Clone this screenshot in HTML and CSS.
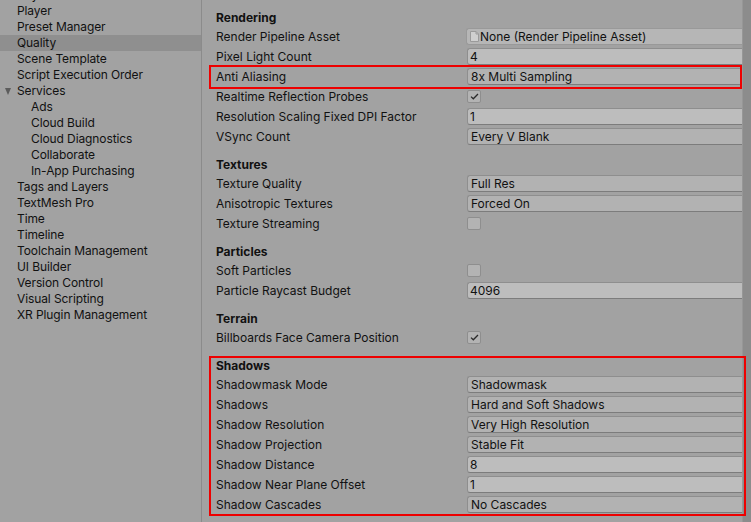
FILE: index.html
```html
<!DOCTYPE html>
<html>
<head>
<meta charset="utf-8">
<link rel="stylesheet" href="styles.css">
</head>
<body>
<div class="app">
  <nav class="sidebar">
    <ul class="tree">
      <li class="item cut">Physics 2D</li>
      <li class="item">Player</li>
      <li class="item">Preset Manager</li>
      <li class="item selected">Quality</li>
      <li class="item">Scene Template</li>
      <li class="item">Script Execution Order</li>
      <li class="item parent"><span class="arrow"></span>Services</li>
      <li class="item sub">Ads</li>
      <li class="item sub">Cloud Build</li>
      <li class="item sub">Cloud Diagnostics</li>
      <li class="item sub">Collaborate</li>
      <li class="item sub">In-App Purchasing</li>
      <li class="item">Tags and Layers</li>
      <li class="item">TextMesh Pro</li>
      <li class="item">Time</li>
      <li class="item">Timeline</li>
      <li class="item">Toolchain Management</li>
      <li class="item">UI Builder</li>
      <li class="item">Version Control</li>
      <li class="item">Visual Scripting</li>
      <li class="item">XR Plugin Management</li>
    </ul>
  </nav>
  <main class="inspector">
    <section class="group">
      <h3 class="heading">Rendering</h3>
      <div class="row"><span class="label">Render Pipeline Asset</span><span class="field object"><svg class="doc" width="9" height="11" viewBox="0 0 9 11"><path d="M0.5 0.5 H6 L8.5 3 V10.5 H0.5 Z" fill="#cfcfcf" stroke="#9a9a9a"/><path d="M6 0.5 V3 H8.5" fill="none" stroke="#9a9a9a"/></svg>None (Render Pipeline Asset)</span></div>
      <div class="row"><span class="label">Pixel Light Count</span><span class="field text">4</span></div>
      <div class="row"><span class="label">Anti Aliasing</span><span class="field drop">8x Multi Sampling</span></div>
      <div class="row"><span class="label">Realtime Reflection Probes</span><span class="check on"><svg width="9" height="7" viewBox="0 0 9 7"><path d="M1 3.6 L3.3 5.8 L8 1" fill="none" stroke="#2a2a2a" stroke-width="1.3"/></svg></span></div>
      <div class="row"><span class="label">Resolution Scaling Fixed DPI Factor</span><span class="field text">1</span></div>
      <div class="row"><span class="label">VSync Count</span><span class="field drop">Every V Blank</span></div>
    </section>
    <section class="group">
      <h3 class="heading">Textures</h3>
      <div class="row"><span class="label">Texture Quality</span><span class="field drop">Full Res</span></div>
      <div class="row"><span class="label">Anisotropic Textures</span><span class="field drop">Forced On</span></div>
      <div class="row"><span class="label">Texture Streaming</span><span class="check"></span></div>
    </section>
    <section class="group">
      <h3 class="heading">Particles</h3>
      <div class="row"><span class="label">Soft Particles</span><span class="check"></span></div>
      <div class="row"><span class="label">Particle Raycast Budget</span><span class="field text">4096</span></div>
    </section>
    <section class="group">
      <h3 class="heading">Terrain</h3>
      <div class="row"><span class="label">Billboards Face Camera Position</span><span class="check on"><svg width="9" height="7" viewBox="0 0 9 7"><path d="M1 3.6 L3.3 5.8 L8 1" fill="none" stroke="#2a2a2a" stroke-width="1.3"/></svg></span></div>
    </section>
    <section class="group">
      <h3 class="heading">Shadows</h3>
      <div class="row"><span class="label">Shadowmask Mode</span><span class="field drop">Shadowmask</span></div>
      <div class="row"><span class="label">Shadows</span><span class="field drop">Hard and Soft Shadows</span></div>
      <div class="row"><span class="label">Shadow Resolution</span><span class="field drop">Very High Resolution</span></div>
      <div class="row"><span class="label">Shadow Projection</span><span class="field drop">Stable Fit</span></div>
      <div class="row"><span class="label">Shadow Distance</span><span class="field text">8</span></div>
      <div class="row"><span class="label">Shadow Near Plane Offset</span><span class="field text">1</span></div>
      <div class="row"><span class="label">Shadow Cascades</span><span class="field drop">No Cascades</span></div>
    </section>
  </main>
  <div class="scrollbar"></div>
</div>
<div class="highlight hl-aa"></div>
<div class="highlight hl-shadows"></div>
</body>
</html>
```
FILE: styles.css
```css
* { box-sizing: border-box; }
html, body { margin: 0; padding: 0; }
body {
  width: 751px;
  height: 522px;
  overflow: hidden;
  position: relative;
  background: #a2a2a2;
  font-family: Inter, "Noto Sans", sans-serif;
  font-size: 12px;
  color: #111111;
}
.app {
  display: flex;
  height: 522px;
}
.sidebar {
  width: 202px;
  flex: none;
  border-right: 1px solid #8b8b8b;
  overflow: hidden;
}
.tree {
  list-style: none;
  margin: -13px 0 0 0;
  padding: 0;
}
.item {
  height: 16px;
  line-height: 16px;
  padding-left: 17px;
  white-space: nowrap;
  position: relative;
  letter-spacing: -0.1px;
}
.item.sub { padding-left: 31px; }
.item.selected { background: #8f8f8f; }
.arrow {
  position: absolute;
  left: 5px;
  top: 5px;
  width: 0;
  height: 0;
  border-left: 3.5px solid transparent;
  border-right: 3.5px solid transparent;
  border-top: 7px solid #5c5c5c;
}
.inspector {
  width: 540px;
  flex: none;
  padding: 8px 0 0 14px;
  overflow: hidden;
}
.group { margin-bottom: 9px; }
.heading {
  margin: 0;
  height: 18px;
  line-height: 20px;
  font-size: 12px;
  font-weight: 700;
}
.row {
  display: flex;
  align-items: center;
  height: 20px;
}
.label {
  width: 250px;
  flex: none;
  white-space: nowrap;
}
.field {
  flex: 1;
  height: 17px;
  line-height: 15px;
  border: 1px solid #8e8e8e;
  border-right: none;
  border-bottom-color: #7c7c7c;
  border-radius: 3px 0 0 3px;
  padding-left: 3px;
  white-space: nowrap;
  overflow: hidden;
}
.field.drop { background: #b2b2b2; margin-left: 1px; }
.field.text { background: #bdbdbd; margin-left: 1px; padding-left: 2px; }
.field.object {
  background: #b6b6b6;
  display: flex;
  align-items: center;
  gap: 1px;
  padding-left: 3px;
  border-color: #999;
}
.doc { flex: none; }
.check {
  width: 14px;
  height: 13px;
  margin-left: 1px;
  border: 1px solid #8e8e8e;
  border-radius: 2px;
  background: #b3b3b3;
  display: flex;
  align-items: center;
  justify-content: center;
}
.scrollbar {
  width: 9px;
  flex: none;
  background: #8c8c8c;
  border-left: 1px solid #979797;
}
.highlight {
  position: absolute;
  border: 2px solid #ee0000;
}
.hl-aa { left: 209px; top: 65px; width: 533px; height: 24px; }
.hl-shadows { left: 209px; top: 356px; width: 537px; height: 160px; }
```
